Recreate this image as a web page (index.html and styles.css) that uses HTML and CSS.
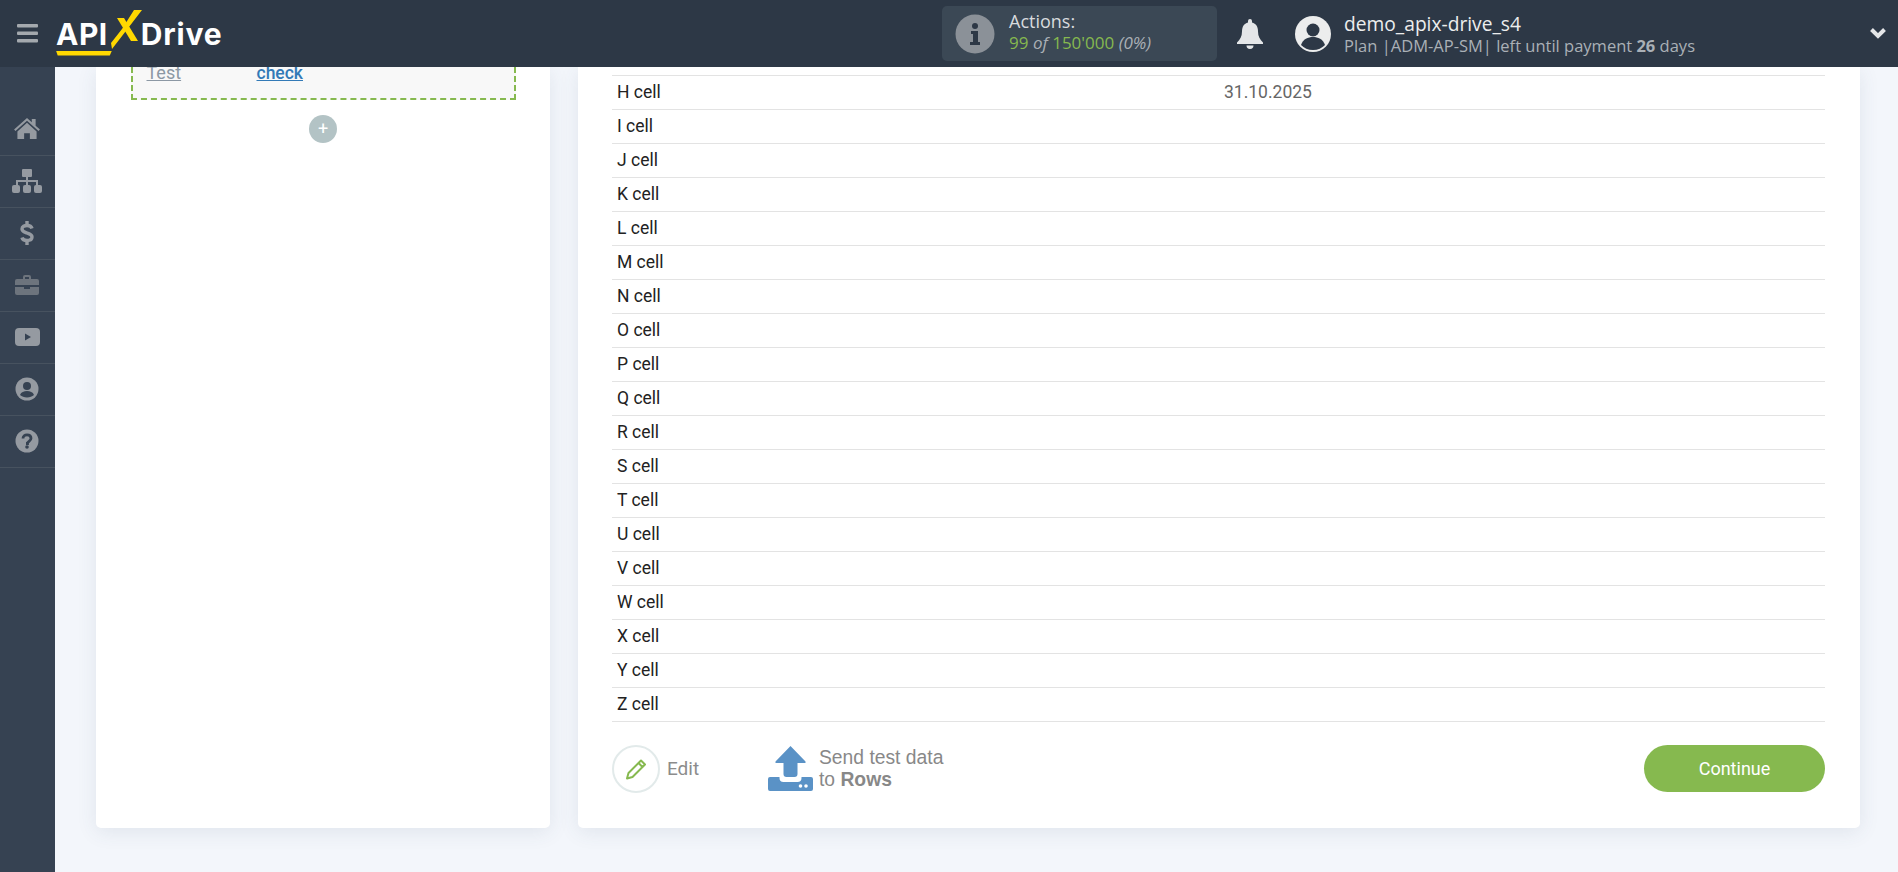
FILE: index.html
```html
<!DOCTYPE html>
<html lang="en">
<head>
<meta charset="utf-8">
<title>ApiX-Drive</title>
<link rel="stylesheet" href="styles.css">
</head>
<body>
<header class="topbar">
  <div class="brand">
    <svg class="burger" width="21" height="19" viewBox="0 0 21 19"><g fill="#a4a9ae"><rect y="0" width="21" height="3.500" rx="1"/><rect y="7.500" width="21" height="3.500" rx="1"/><rect y="15" width="21" height="3.500" rx="1"/></g></svg>
    <div class="logo">
      <span class="logo-api">API</span><span class="logo-drive">Drive</span>
      <svg class="logo-x" width="32" height="39" viewBox="0 0 32 39"><path d="M23 0h8L9.500 28 1 39l-1-6 11-14z" fill="#ffd800"/><path d="M6 8h7l14 23h-7z" fill="#ffd800"/></svg>
      <span class="logo-bar"></span>
    </div>
  </div>
  <div class="stats">
    <div class="actions">
      <span class="info-ico"><svg width="40" height="40" viewBox="0 0 40 40"><circle cx="20" cy="20" r="19.500" fill="#8b9198"/><circle cx="20" cy="12" r="3" fill="#2d3846"/><path d="M16 17h7v11h2v3H15v-3h3v-8h-2z" fill="#2d3846"/></svg></span>
      <div class="actions-text">
        <div class="actions-title">Actions:</div>
        <div class="actions-count"><span class="green">99</span> <i>of</i> <span class="green">150'000</span> <i>(0%)</i></div>
      </div>
    </div>
    <svg class="bell" width="28" height="30" viewBox="0 0 28 30"><path d="M14 0a2 2 0 0 1 2 2v1.500c4 1 6 4 6 9 0 5 2 8 5 11v1.500H1V23.500c3-3 5-6 5-11 0-5 2-8 6-9V2a2 2 0 0 1 2-2z" fill="#e4e6e8"/><path d="M10.500 26.500h7a3.500 3.500 0 0 1-7 0z" fill="#e4e6e8"/></svg>
    <div class="user">
      <svg width="36" height="36" viewBox="0 0 36 36"><circle cx="18" cy="18" r="18" fill="#eceded"/><circle cx="18" cy="14" r="6.500" fill="#2d3846"/><path d="M6 29c2-6 7-8 12-8s10 2 12 8c-3 3-7 5-12 5s-9-2-12-5z" fill="#2d3846"/></svg>
      <div class="user-text">
        <div class="user-name">demo_apix-drive_s4</div>
        <div class="user-plan">Plan |ADM-AP-SM| left until payment <b>26</b> days</div>
      </div>
    </div>
  </div>
  <svg class="chevron" width="18" height="12" viewBox="0 0 18 12"><path d="M2.500 2.500L9 9l6.500-6.500" fill="none" stroke="#e4e6e8" stroke-width="4"/></svg>
</header>
<div class="shell">
  <nav class="sidebar">
    <a class="nav-item"><svg width="28" height="23" viewBox="0 0 28 24"><path d="M14 1L0.500 13l1.500 1.500L14 4l12 10.500 1.500-1.500-4.500-4V2h-4v3.500z" fill="#959aa1"/><path d="M14 6L4 15v8h7v-6h6v6h7v-8z" fill="#959aa1"/></svg></a>
    <a class="nav-item"><svg width="30" height="24" viewBox="0 0 30 24"><g fill="#959aa1"><rect x="10" y="0" width="10" height="8" rx="1"/><rect x="0" y="16" width="8" height="8" rx="2"/><rect x="11" y="16" width="8" height="8" rx="2"/><rect x="22" y="16" width="8" height="8" rx="2"/><path d="M14 8h2v3h10v5h-2v-3H16v3h-2v-3H6v3H4v-5h10z"/></g></svg></a>
    <a class="nav-item"><svg width="14" height="24" viewBox="0 0 14 24"><path d="M12 7.500C11.500 5.500 9.500 4.500 7 4.500S2 5.500 2 8s2.500 3 5 4 5 1.500 5 4-2.500 3.500-5 3.500-4.500-1-5-3" fill="none" stroke="#959aa1" stroke-width="3.400"/><path d="M5.300 0h3.400v4h-3.400zM5.300 20h3.400v4h-3.400z" fill="#959aa1"/></svg></a>
    <a class="nav-item"><svg width="24" height="20" viewBox="0 0 24 20"><path d="M8 4V2a2 2 0 0 1 2-2h4a2 2 0 0 1 2 2v2h6a2 2 0 0 1 2 2v4H0V6a2 2 0 0 1 2-2zm2 0h4V2h-4zM0 12h9v2h6v-2h9v6a2 2 0 0 1-2 2H2a2 2 0 0 1-2-2z" fill="#6d747d"/></svg></a>
    <a class="nav-item"><svg width="25" height="18" viewBox="0 0 25 18"><rect width="25" height="18" rx="4" fill="#959aa1"/><path d="M10 5.500l6 3.500-6 3.500z" fill="#364252"/></svg></a>
    <a class="nav-item"><svg width="24" height="24" viewBox="0 0 24 24"><circle cx="12" cy="12" r="11.500" fill="#959aa1"/><circle cx="12" cy="9" r="4" fill="#364252"/><path d="M5 18c1-3 4-4 7-4s6 1 7 4c-2 1.500-4 2.500-7 2.500s-5-1-7-2.500z" fill="#364252"/></svg></a>
    <a class="nav-item"><svg width="24" height="24" viewBox="0 0 24 24"><circle cx="12" cy="12" r="11.500" fill="#959aa1"/><path d="M8 9.500C8 7 9.800 5.800 12 5.800s4 1.300 4 3.500c0 3-3.500 3-3.500 5.200h-1.500" fill="none" stroke="#364252" stroke-width="2.800"/><circle cx="12" cy="18" r="1.800" fill="#364252"/></svg></a>
  </nav>
  <main class="content">
    <section class="card card-left">
      <div class="test-box">
        <a class="test-link">Test</a>
        <a class="check-link">check</a>
      </div>
      <div class="plus">+</div>
    </section>
    <section class="card card-right">
      <div class="rows">
        <div class="row"><span class="cell-name">H cell</span><span class="cell-value">31.10.2025</span></div>
        <div class="row"><span class="cell-name">I cell</span></div>
        <div class="row"><span class="cell-name">J cell</span></div>
        <div class="row"><span class="cell-name">K cell</span></div>
        <div class="row"><span class="cell-name">L cell</span></div>
        <div class="row"><span class="cell-name">M cell</span></div>
        <div class="row"><span class="cell-name">N cell</span></div>
        <div class="row"><span class="cell-name">O cell</span></div>
        <div class="row"><span class="cell-name">P cell</span></div>
        <div class="row"><span class="cell-name">Q cell</span></div>
        <div class="row"><span class="cell-name">R cell</span></div>
        <div class="row"><span class="cell-name">S cell</span></div>
        <div class="row"><span class="cell-name">T cell</span></div>
        <div class="row"><span class="cell-name">U cell</span></div>
        <div class="row"><span class="cell-name">V cell</span></div>
        <div class="row"><span class="cell-name">W cell</span></div>
        <div class="row"><span class="cell-name">X cell</span></div>
        <div class="row"><span class="cell-name">Y cell</span></div>
        <div class="row"><span class="cell-name">Z cell</span></div>
      </div>
      <div class="actions-row">
        <div class="edit">
          <span class="edit-circle"><svg width="22" height="22" viewBox="0 0 22 22"><path d="M16 2.500l4 4L7.500 19 2 20.500 3.500 15zM13.500 5l4 4" fill="none" stroke="#86b94f" stroke-width="2" stroke-linejoin="round"/></svg></span>
          <span class="edit-label">Edit</span>
        </div>
        <div class="send">
          <svg width="45" height="45" viewBox="0 0 45 45"><path d="M22.500 0L37.500 15.500V17H29.500v11a3 3 0 0 1-3 3h-8a3 3 0 0 1-3-3V17H7.500v-1.500z" fill="#5a92c6"/><path d="M2 31h9.500v1a4 4 0 0 0 4 4h14a4 4 0 0 0 4-4v-1H43a2 2 0 0 1 2 2v10a2 2 0 0 1-2 2H2a2 2 0 0 1-2-2V33a2 2 0 0 1 2-2z" fill="#5a92c6"/><circle cx="32.500" cy="40" r="1.800" fill="#fff"/><circle cx="38" cy="40" r="1.800" fill="#fff"/></svg>
          <div class="send-text">Send test data<br>to <b>Rows</b></div>
        </div>
        <button class="continue">Continue</button>
      </div>
    </section>
  </main>
</div>
</body>
</html>
```

FILE: styles.css
```css
* { box-sizing: border-box; }
html, body { margin: 0; height: 100%; overflow: hidden; }
body { font-family: Roboto, sans-serif; background: #f3f6fb; color: #333; }

.topbar {
  height: 67px;
  background: #2d3846;
  display: flex;
  align-items: center;
  position: relative;
  z-index: 2;
}
.brand { display: flex; align-items: center; width: 942px; padding-left: 17px; }
.burger { margin-right: 18px; }
.logo { display: flex; align-items: center; position: relative; height: 40px; color: #fff; font-family: Inter, "Noto Sans", sans-serif; font-size: 30px; font-weight: 700; }
.logo-api { letter-spacing: 0.500px; line-height: 40px; }
.logo-drive { line-height: 40px; letter-spacing: 0.800px; margin-left: 33px; }
.logo-x { position: absolute; left: 55px; top: -4px; }
.logo-bar { position: absolute; left: 0; bottom: -2px; width: 56px; height: 5px; background: #ffd800; clip-path: polygon(0 0, 100% 0, 96% 100%, 3% 100%); }

.stats { display: flex; align-items: center; }
.actions {
  width: 275px; height: 55px;
  background: #3b4855;
  border-radius: 5px;
  display: flex; align-items: center;
  padding-left: 13px;
}
.info-ico { width: 40px; height: 40px; margin-right: 14px; display: block; }
.info-ico svg { display: block; }
.actions-text { font-family: "Open Sans", sans-serif; font-size: 17px; line-height: 22px; color: #d8dbde; padding-bottom: 4px; }
.actions-title { font-size: 18px; }
.actions-count { color: #aab0b6; }
.green { color: #86b94f; }
.bell { margin-left: 19px; }
.user { display: flex; align-items: center; margin-left: 31px; color: #fff; font-family: "Open Sans", sans-serif; }
.user-text { margin-left: 13px; }
.user-name { font-size: 19.200px; line-height: 23px; color: #eceded; }
.user-plan { font-size: 16.500px; line-height: 21px; color: #aab0b6; }
.chevron { position: absolute; right: 11px; top: 27px; }

.shell { display: flex; height: 805px; }
.sidebar { width: 55px; background: #364252; flex: none; padding-top: 37px; }
.nav-item { display: flex; height: 52px; align-items: center; justify-content: center; border-bottom: 1px solid #47525f; padding: 0 1px 2px 0; }

.content { flex: 1; display: flex; gap: 28px; padding: 0 38px 44px 41px; overflow: hidden; }
.card { background: #fff; border-radius: 0 0 5px 5px; box-shadow: 0 4px 20px rgba(60, 80, 110, 0.1); }
.card-left { width: 454px; padding: 0 34px; display: flex; flex-direction: column; align-items: center; }
.card-right { flex: 1; padding: 8px 35px 0 34px; }

.test-box {
  width: 385px; height: 33px;
  background: #f8f8f8;
  border: 2px dashed #86b94f;
  border-top: 0;
  display: flex;
  padding-left: 14px;
  font-size: 17.500px;
  line-height: 12px;
  font-weight: 500;
}
.test-link { color: #8c98a4; text-decoration: underline; width: 110px; font-weight: 400; font-size: 18px; }
.check-link { color: #337ab7; text-decoration: underline; }
.plus {
  width: 28px; height: 28px; margin-top: 15px;
  border-radius: 50%;
  background: #b3c3c5;
  color: #fff;
  font-size: 18px; line-height: 27px; text-align: center;
}

.rows { border-top: 1px solid #e3e3e3; }
.row { display: flex; height: 34px; border-bottom: 1px solid #e3e3e3; align-items: center; padding: 0 0 2px 5px; font-size: 17.500px; }
.cell-name { width: 607px; color: #222; }
.cell-value { color: #666; }

.actions-row { display: flex; align-items: center; margin-top: 23px; height: 47px; }
.edit { display: flex; align-items: center; width: 156px; }
.edit-circle { width: 48px; height: 48px; border: 2px solid #e2eaea; border-radius: 50%; display: flex; align-items: center; justify-content: center; }
.edit-label { margin-left: 7px; font-size: 19px; color: #8c8c8c; }
.send { display: flex; align-items: center; }
.send-text { margin-left: 6px; font-family: "Liberation Sans", Arial, sans-serif; font-size: 19.300px; line-height: 22px; color: #888; }
.continue {
  margin-left: auto;
  width: 181px; height: 47px;
  border: 0; border-radius: 24px;
  background: #86b94f;
  color: #fff;
  font-family: Roboto, sans-serif;
  font-size: 18px;
}
```
